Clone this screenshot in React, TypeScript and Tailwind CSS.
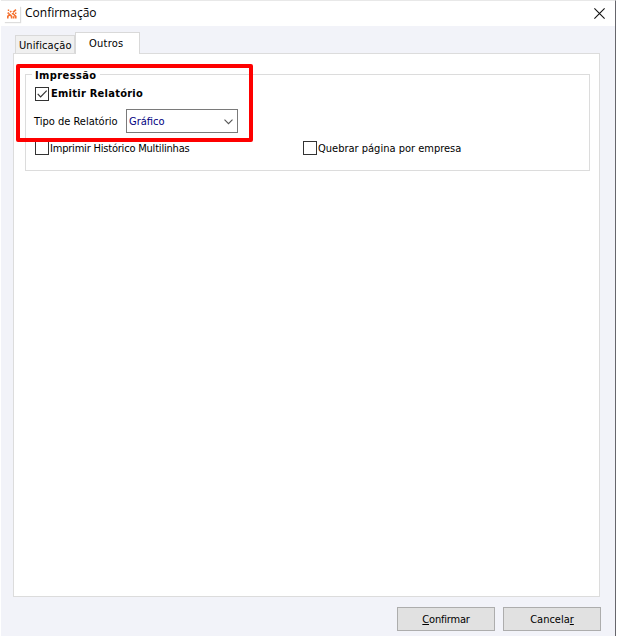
import type { ReactNode } from "react";

function Tick() {
  return (
    <svg width="12" height="12" viewBox="0 0 12 12" fill="none" stroke="#333" strokeWidth="1.2">
      <path d="M1.7 5.9 4.6 8.8 10.7 2.7" />
    </svg>
  );
}

function CheckBox({ checked = false, children }: { checked?: boolean; children: ReactNode }) {
  return (
    <label className="flex h-[14px] items-center whitespace-nowrap">
      <span className="mr-[2px] size-[14px] shrink-0 border border-[#333] bg-white">
        {checked && <Tick />}
      </span>
      {children}
    </label>
  );
}

function Button({ children }: { children: ReactNode }) {
  return (
    <button className="h-[24px] w-[98px] border border-[#adadad] bg-[#e1e1e1] text-center leading-[24px]">
      {children}
    </button>
  );
}

function AppLogo() {
  return (
    <span className="flex size-4 items-center justify-center bg-white shadow-[1px_1px_1px_#ddd]">
      <svg width="10" height="10" viewBox="0 0 10 10" fill="none" stroke="#f4702f" strokeWidth="1.6">
        <path d="M.8 1.2h1.4M3 3.2 4.4 2M6 3.4 9 .6M.6 4.6 2 3.6M.8 9.6V7.4L2.6 5.4l2 2v2.2M4.8 4.8h1.4l2.6 2.6v2.2M8 4.2h1.4M6.7 7.2v2.4" />
      </svg>
    </span>
  );
}

function TitleBar() {
  return (
    <header className="flex h-[25px] items-center bg-white pl-[3px]">
      <AppLogo />
      <h1 className="-mt-[2px] ml-[5px] grow font-['Open_Sans',sans-serif] text-[12px] leading-4 text-black">
        Confirmação
      </h1>
      <svg className="-mt-px mr-[10px]" width="11" height="11" viewBox="0 0 11 11" stroke="#111" strokeWidth="1.1">
        <path d="m.4.4 10.2 10.2M10.6.4.4 10.6" />
      </svg>
    </header>
  );
}

function Tabs() {
  return (
    <nav className="flex h-[21px] items-end pl-[2px]">
      <div className="h-[18px] w-[60px] border border-b-0 border-[#d9d9d9] bg-[#f0f0f0] pl-[3px] leading-[19px]">
        <span className="tracking-[0.1px]">Unificação</span>
      </div>
      <div className="relative -mb-px h-[22px] w-[65px] border border-b-0 border-[#d9d9d9] bg-white pl-[13px] leading-[22px]">
        <span className="tracking-[0.25px]">Outros</span>
      </div>
    </nav>
  );
}

function PrintOptions() {
  return (
    <section className="mt-[20px] ml-[11px] h-[97px] w-[565px] border border-[#dcdcdc] pl-[6px]">
      <h2 className="-mt-[7px] h-[14px] w-[68px] bg-white pl-[3px] text-[11px] leading-[16px] font-bold tracking-[0.4px]">
        Impressão
      </h2>
      <div className="mt-[5px] ml-[3px] text-[11px] font-bold tracking-[0.26px]">
        <CheckBox checked>
          <span className="mt-px">Emitir Relatório</span>
        </CheckBox>
      </div>
      <div className="mt-[8px] ml-[2px] flex h-[24px] items-center">
        <span className="mt-[2px] w-[92px] whitespace-nowrap">Tipo de Relatório</span>
        <div className="flex h-[24px] w-[112px] items-center justify-between border border-[#7a7a7a] bg-white pr-[4px] pl-[2px] text-[#000080]">
          <span className="mt-[2px]">Gráfico</span>
          <svg className="mt-px" width="9" height="6" viewBox="0 0 9 6" fill="none" stroke="#555" strokeWidth="1.1">
            <path d="m.5.7 4 4 4-4" />
          </svg>
        </div>
      </div>
      <div className="mt-[8px] ml-[3px] grid grid-cols-[268px_1fr]">
        <CheckBox>
          <span className="mt-[2px] -ml-px tracking-[-0.2px]">Imprimir Histórico Multilinhas</span>
        </CheckBox>
        <CheckBox>
          <span className="mt-[2px] -ml-px">Quebrar página por empresa</span>
        </CheckBox>
      </div>
    </section>
  );
}

export default function App() {
  return (
    <div className="relative flex h-[636px] w-[617px] overflow-hidden bg-white pl-px font-['DejaVu_Sans_Condensed','DejaVu_Sans',sans-serif] text-[11px] text-black">
      <main className="flex w-[615px] flex-col border-t border-r border-t-[#e8e8e8] border-r-[#66666c] bg-[#f2f3f9]">
        <TitleBar />
        <div className="mt-[6px] ml-[12px] w-[587px]">
          <Tabs />
          <div className="flow-root h-[544px] border border-[#dcdcdc] bg-white">
            <PrintOptions />
          </div>
        </div>
        <footer className="mt-[10px] flex justify-end gap-[8px] pr-[14px]">
          <Button>
            <span className="tracking-[-0.2px]">
              <u>C</u>onfirmar
            </span>
          </Button>
          <Button>
            Cancela<u>r</u>
          </Button>
        </footer>
      </main>
      {/* highlight over the print options */}
      <div className="pointer-events-none absolute top-[64px] left-[16px] h-[78px] w-[237px] rounded-[2px] border-4 border-[#fe0000]" />
    </div>
  );
}
